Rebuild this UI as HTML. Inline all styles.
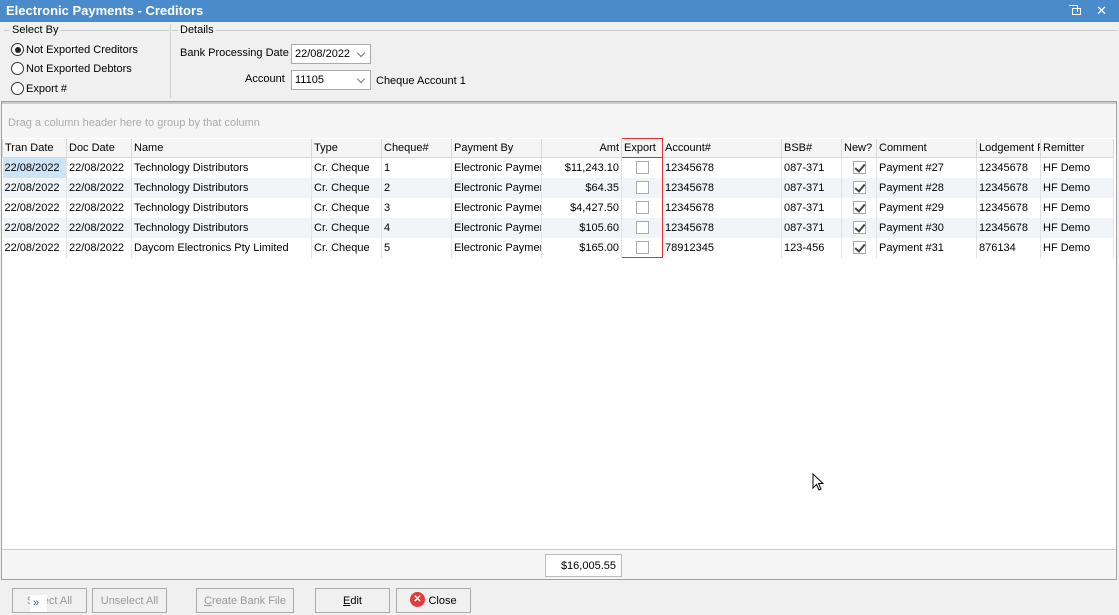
<!DOCTYPE html>
<html><head><style>
*{box-sizing:border-box;margin:0;padding:0}
body{width:1119px;height:615px;background:#f0f0f0;font-family:"Liberation Sans",sans-serif;font-size:11px;color:#000;position:relative;overflow:hidden}
.abs{position:absolute}
.title{left:0;top:0;width:1119px;height:22px;background:#4a8bcb;color:#fff;font-weight:bold;font-size:13px;padding:3px 6px}
.radio{position:absolute;left:11px;width:13px;height:13px;border:1px solid #333;border-radius:50%;background:#fff}
.lbl{position:absolute;white-space:nowrap}
.combo{position:absolute;height:20px;border:1px solid #aaa;background:#fff;padding:3px 3px}
.combo:after{content:"";position:absolute;right:6px;top:5px;width:5px;height:5px;border-right:1.5px solid #777;border-bottom:1.5px solid #777;transform:rotate(45deg)}
.grid{left:1px;top:101px;width:1116px;height:479px;border:1px solid #a0a0a0;background:#fff}
.group{left:0;top:0;width:1114px;height:36px;background:#f5f5f5;color:#aaa;padding:13px 6px;border-top:2px solid #ccc}
table{position:absolute;left:0px;top:36px;border-collapse:collapse;table-layout:fixed;width:1111px}
td{height:20px;border-right:1px solid #e4e4e4;padding:0 2px;white-space:nowrap;overflow:hidden}
thead td{height:19px;background:#f5f5f5;border:1px solid #d8d8d8;border-top:none}
tr.alt td{background:#f1f5fa}
.r{text-align:right}
.cb{display:block;margin:0 auto;width:13px;height:13px;border:1px solid #aaa;background:#fff;position:relative}
.ck:after{content:"";position:absolute;left:3px;top:0px;width:4px;height:8px;border-right:2px solid #444;border-bottom:2px solid #444;transform:rotate(40deg)}
.foot{left:0;top:447px;width:1114px;height:30px;background:#f5f5f5;border-top:1px solid #ccc}
.btn{position:absolute;top:588px;height:25px;border:1px solid #aaa;background:#f0f0f0;text-align:center;padding-top:6px;color:#999}
.ex{border-left:1px solid #e03030 !important;border-right:1px solid #e03030 !important}
</style></head><body>
<div class="abs title">Electronic Payments - Creditors</div>
<div class="abs" style="right:38px;top:8px;width:9px;height:7px;border:1.5px solid #fff"></div>
<div class="abs" style="right:41px;top:5px;width:9px;height:7px;border-top:1.5px solid #fff;border-right:1.5px solid #fff"></div>
<div class="abs" style="right:12px;top:3px;color:#fff;font-size:13px">✕</div>

<div class="abs" style="left:4px;top:30px;width:165px;border-top:1px solid #ccc"></div>
<div class="lbl" style="left:10px;top:24px;background:#f0f0f0;padding:0 2px">Select By</div>
<div class="abs" style="left:170px;top:24px;width:1px;height:74px;background:#d0d0d0"></div>
<div class="abs" style="left:172px;top:30px;width:946px;border-top:1px solid #ccc"></div>
<div class="lbl" style="left:178px;top:24px;background:#f0f0f0;padding:0 2px">Details</div>
<div class="radio" style="top:43px"><div style="margin:2.5px;width:6px;height:6px;border-radius:50%;background:#222"></div></div>
<div class="lbl" style="left:26px;top:44px">Not Exported Creditors</div>
<div class="radio" style="top:62px"></div>
<div class="lbl" style="left:26px;top:63px">Not Exported Debtors</div>
<div class="radio" style="top:82px"></div>
<div class="lbl" style="left:26px;top:83px">Export #</div>
<div class="lbl" style="left:180px;top:47px">Bank Processing Date</div>
<div class="combo" style="left:291px;top:44px;width:80px">22/08/2022</div>
<div class="lbl" style="left:245px;top:73px">Account</div>
<div class="combo" style="left:291px;top:70px;width:80px">11105</div>
<div class="lbl" style="left:376px;top:75px">Cheque Account 1</div>

<div class="abs grid">
<div class="abs group">Drag a column header here to group by that column</div>
<table>
<colgroup><col style="width:64px"><col style="width:65px"><col style="width:180px"><col style="width:70px"><col style="width:70px"><col style="width:90px"><col style="width:80px"><col style="width:41px"><col style="width:119px"><col style="width:60px"><col style="width:35px"><col style="width:100px"><col style="width:64px"><col style="width:73px"></colgroup>
<thead><tr><td>Tran Date</td><td>Doc Date</td><td>Name</td><td>Type</td><td>Cheque#</td><td>Payment By</td><td class="r">Amt</td><td style="border:1px solid #e03030">Export</td><td>Account#</td><td>BSB#</td><td>New?</td><td>Comment</td><td>Lodgement R</td><td>Remitter</td></tr></thead>
<tr><td style="background:#cde4f7">22/08/2022</td><td>22/08/2022</td><td>Technology Distributors</td><td>Cr. Cheque</td><td>1</td><td>Electronic Payment</td><td class="r">$11,243.10</td><td class="ex"><span class="cb"></span></td><td>12345678</td><td>087-371</td><td><span class="cb ck"></span></td><td>Payment #27</td><td>12345678</td><td>HF Demo</td></tr>
<tr class="alt"><td>22/08/2022</td><td>22/08/2022</td><td>Technology Distributors</td><td>Cr. Cheque</td><td>2</td><td>Electronic Payment</td><td class="r">$64.35</td><td class="ex"><span class="cb"></span></td><td>12345678</td><td>087-371</td><td><span class="cb ck"></span></td><td>Payment #28</td><td>12345678</td><td>HF Demo</td></tr>
<tr><td>22/08/2022</td><td>22/08/2022</td><td>Technology Distributors</td><td>Cr. Cheque</td><td>3</td><td>Electronic Payment</td><td class="r">$4,427.50</td><td class="ex"><span class="cb"></span></td><td>12345678</td><td>087-371</td><td><span class="cb ck"></span></td><td>Payment #29</td><td>12345678</td><td>HF Demo</td></tr>
<tr class="alt"><td>22/08/2022</td><td>22/08/2022</td><td>Technology Distributors</td><td>Cr. Cheque</td><td>4</td><td>Electronic Payment</td><td class="r">$105.60</td><td class="ex"><span class="cb"></span></td><td>12345678</td><td>087-371</td><td><span class="cb ck"></span></td><td>Payment #30</td><td>12345678</td><td>HF Demo</td></tr>
<tr><td>22/08/2022</td><td>22/08/2022</td><td>Daycom Electronics Pty Limited</td><td>Cr. Cheque</td><td>5</td><td>Electronic Payment</td><td class="r">$165.00</td><td class="ex" style="border-bottom:1px solid #e03030"><span class="cb"></span></td><td>78912345</td><td>123-456</td><td><span class="cb ck"></span></td><td>Payment #31</td><td>876134</td><td>HF Demo</td></tr>
</table>
<div class="abs foot"><div class="abs" style="left:543px;top:4px;width:77px;height:23px;border:1px solid #bbb;background:#fff;text-align:right;padding:5px 5px">$16,005.55</div></div>
</div>

<div class="btn" style="left:12px;width:75px">Select All</div>
<div class="abs" style="left:30px;top:595px;width:17px;height:17px;background:#fff;color:#2a5db0;font-size:11px;padding:2px 3px">»</div>
<div class="btn" style="left:92px;width:75px">Unselect All</div>
<div class="btn" style="left:196px;width:98px"><u>C</u>reate Bank File</div>
<div class="btn" style="left:315px;width:75px;color:#000"><u>E</u>dit</div>
<div class="btn" style="left:396px;width:75px;color:#000;padding-left:18px">Close</div>
<div class="abs" style="left:410px;top:592px;width:15px;height:15px;border-radius:50%;background:#e23b3b;color:#fff;font-size:10px;font-weight:bold;text-align:center;line-height:15px">✕</div>
<svg class="abs" style="left:812px;top:473px" width="13" height="20"><path d="M1 1 L1 15 L4.5 11.5 L7 17 L9 16 L6.5 10.5 L11 10.5 Z" fill="#fff" stroke="#000" stroke-width="1"/></svg>
</body></html>
